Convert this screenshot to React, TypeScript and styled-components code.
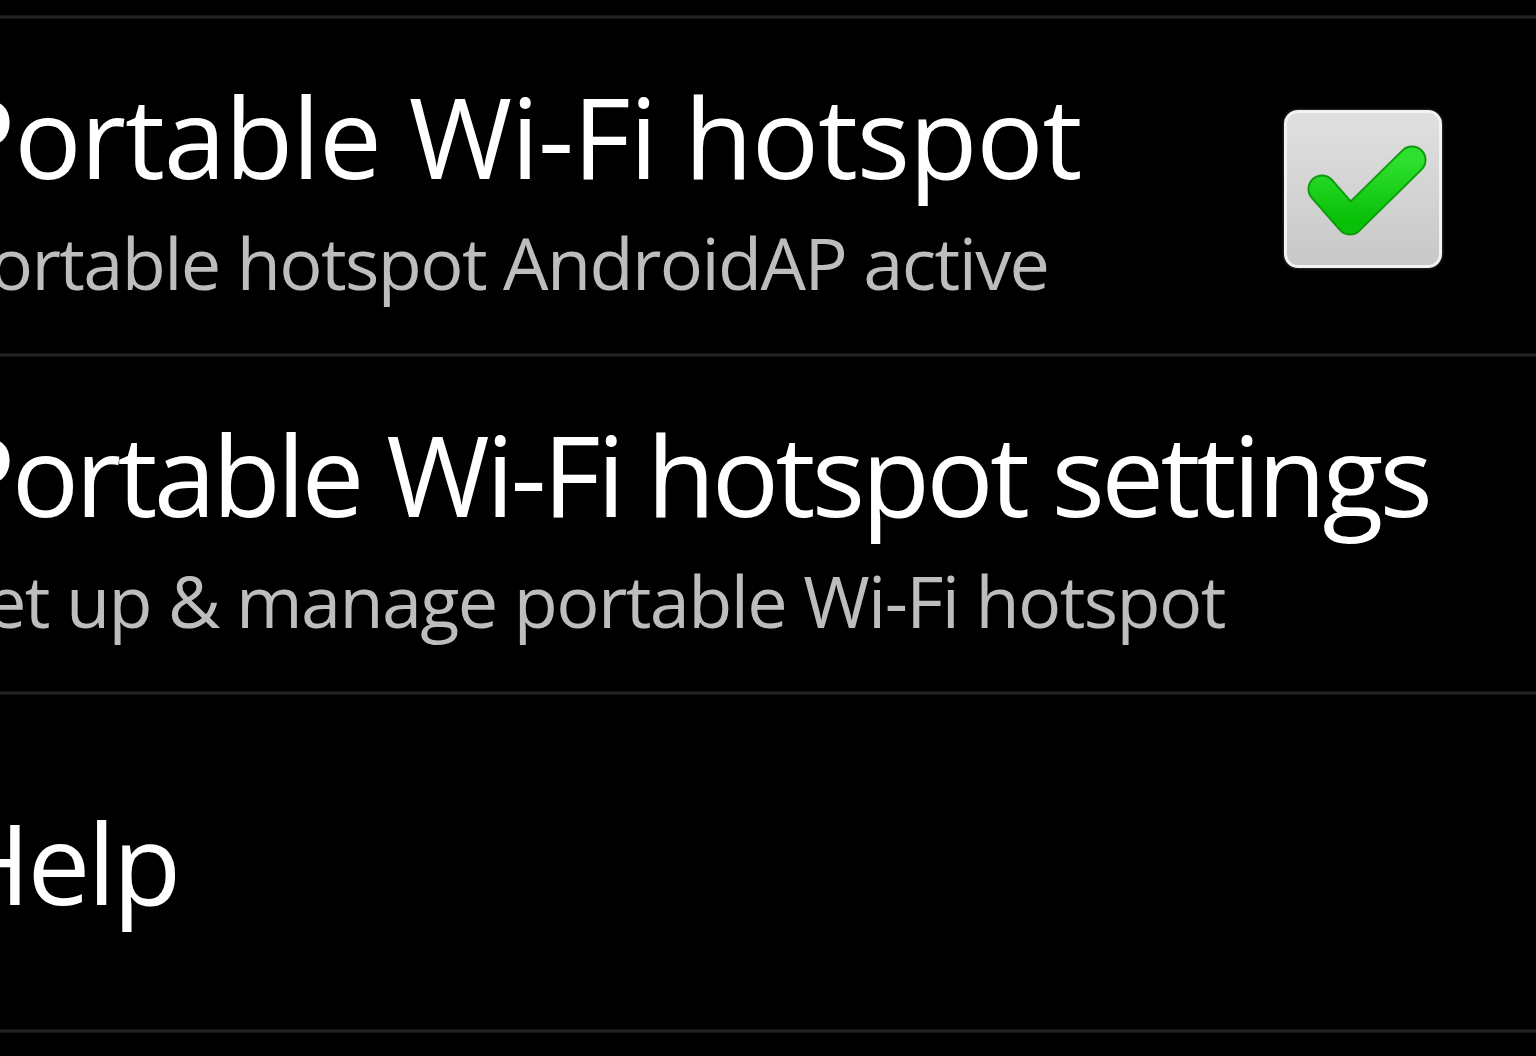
import React from 'react';
import styled, { createGlobalStyle } from 'styled-components';

const GlobalStyle = createGlobalStyle`
  html, body {
    margin: 0;
    padding: 0;
    background: #000;
    overflow: hidden;
  }
  body {
    font-family: "Open Sans", "Noto Sans", "DejaVu Sans", sans-serif;
  }
`;

interface Pref {
  title: string;
  summary?: string;
  checked?: boolean;
  // the screenshot's text runs tighter than Open Sans, by a different amount per row
  titleTracking: number;
}

const prefs: Pref[] = [
  {
    title: 'Portable Wi-Fi hotspot',
    summary: 'Portable hotspot AndroidAP active',
    checked: true,
    titleTracking: -1.2,
  },
  {
    title: 'Portable Wi-Fi hotspot settings',
    summary: 'Set up & manage portable Wi-Fi hotspot',
    titleTracking: -3.7,
  },
  { title: 'Help', titleTracking: -3 },
];

// tick drawn in the checkbox's own 152x152 box
const CheckMark = () => (
  <svg width="152" height="152" viewBox="0 0 152 152">
    <defs>
      <linearGradient id="tickFill" x1="0" y1="0" x2="0" y2="1">
        <stop offset="0" stopColor="#2ee02e" />
        <stop offset="1" stopColor="#08c008" />
      </linearGradient>
    </defs>
    <path
      d="M35 76 L63 108 L125 47"
      fill="none"
      stroke="#109a10"
      strokeWidth="29"
      strokeLinecap="round"
      strokeLinejoin="round"
    />
    <path
      d="M35 76 L63 108 L125 47"
      fill="none"
      stroke="url(#tickFill)"
      strokeWidth="25"
      strokeLinecap="round"
      strokeLinejoin="round"
    />
  </svg>
);

const App: React.FunctionComponent = () => (
  <>
    <GlobalStyle />
    <Screen>
      <TopEdge />
      {prefs.map((pref) => (
        <React.Fragment key={pref.title}>
          <Divider />
          <Row>
            <TextBlock hasSummary={!!pref.summary}>
              <Title tracking={pref.titleTracking}>{pref.title}</Title>
              {pref.summary && <Summary>{pref.summary}</Summary>}
            </TextBlock>
            {pref.checked !== undefined && (
              <CheckBox>
                <CheckMark />
              </CheckBox>
            )}
          </Row>
        </React.Fragment>
      ))}
      <Divider />
    </Screen>
  </>
);

const Screen = styled.div`
  display: flex;
  flex-direction: column;
  width: 1536px;
  height: 1056px;
  background: #000;
  overflow: hidden;
`;

const TopEdge = styled.div`
  height: 15px;
`;

const Divider = styled.div`
  height: 4px;
  flex-shrink: 0;
  background: linear-gradient(#111, #262626 50%, #111);
`;

const Row = styled.div`
  display: flex;
  align-items: center;
  height: 334px;
  flex-shrink: 0;
  padding-right: 94px;
`;

const TextBlock = styled.div<{ hasSummary: boolean }>`
  flex: 1;
  display: flex;
  flex-direction: column;
  margin-left: -52px;
  padding-top: ${({ hasSummary }) => (hasSummary ? '14px' : '0')};
  white-space: nowrap;
`;

const Title = styled.div<{ tracking: number }>`
  color: #fff;
  font-size: 112px;
  line-height: 120px;
  letter-spacing: ${({ tracking }) => tracking}px;
`;

const Summary = styled.div`
  color: #bdbdbd;
  font-size: 72px;
  line-height: 98px;
  margin-top: 17px;
  letter-spacing: -1.6px;
`;

const CheckBox = styled.div`
  width: 152px;
  height: 152px;
  border: 3px solid #f2f2f2;
  border-radius: 14px;
  background: linear-gradient(#e0e0e0, #c8c8c8);
  box-shadow: 0 0 3px rgba(255, 255, 255, 0.35);
  box-sizing: content-box;
  margin-top: 6px;

  svg {
    display: block;
  }
`;

export default App;
